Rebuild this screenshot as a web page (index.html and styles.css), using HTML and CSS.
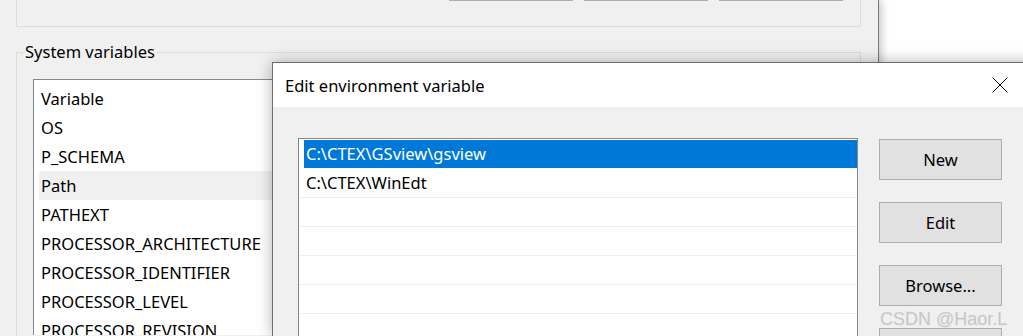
FILE: index.html
```html
<!DOCTYPE html>
<html lang="en">
  <head>
    <meta charset="UTF-8" />
    <meta name="viewport" content="width=device-width, initial-scale=1.0" />
    <title>Environment Variables</title>
    <link rel="stylesheet" href="styles.css">
  </head>
  <body>
    <div class="ventana">
      <div class="grupo-arriba">
        <div class="botones-arriba">
          <button class="btn"></button>
          <button class="btn"></button>
          <button class="btn"></button>
        </div>
      </div>
      <div class="grupo-sistema">
        <span class="leyenda">System variables</span>
        <div class="lista-sistema">
          <div class="fila">Variable</div>
          <div class="fila">OS</div>
          <div class="fila">P_SCHEMA</div>
          <div class="fila marcada">Path</div>
          <div class="fila">PATHEXT</div>
          <div class="fila">PROCESSOR_ARCHITECTURE</div>
          <div class="fila">PROCESSOR_IDENTIFIER</div>
          <div class="fila">PROCESSOR_LEVEL</div>
          <div class="fila">PROCESSOR_REVISION</div>
        </div>
      </div>
    </div>

    <div class="dialogo">
      <div class="titulo">
        <span>Edit environment variable</span>
        <span class="cerrar">
          <svg width="16" height="16" viewBox="0 0 16 16">
            <path d="M0.5 0.5 L15.5 15.5 M15.5 0.5 L0.5 15.5" stroke="#000" stroke-width="1" fill="none" />
          </svg>
        </span>
      </div>
      <div class="cuerpo">
        <div class="lista-rutas">
          <div class="ruta elegida">C:\CTEX\GSview\gsview</div>
          <div class="ruta">C:\CTEX\WinEdt</div>
          <div class="ruta"></div>
          <div class="ruta"></div>
          <div class="ruta"></div>
          <div class="ruta"></div>
        </div>
        <div class="acciones">
          <button class="btn grande">New</button>
          <button class="btn grande">Edit</button>
          <button class="btn grande">Browse...</button>
          <button class="btn grande corto"></button>
        </div>
      </div>
    </div>

    <div class="marca">CSDN @Haor.L</div>
  </body>
</html>
```

FILE: styles.css
```css
body{
    margin: 0;
    width: 1023px;
    height: 336px;
    overflow: hidden;
    position: relative;
    background: #fff;
    font-family: "Segoe UI", "Noto Sans", sans-serif;
    font-size: 16.5px;
    color: #000;
}
.ventana{
    box-sizing: border-box;
    width: 879px;
    height: 336px;
    background: #f0f0f0;
    border-right: 1px solid #7a7a7a;
    box-shadow: 2px 0 8px rgba(0, 0, 0, 0.25);
    overflow: hidden;
}
.btn{
    box-sizing: border-box;
    background: #e1e1e1;
    border: 1px solid #adadad;
    font: inherit;
    color: #000;
    padding: 0;
}
.grupo-arriba{
    box-sizing: border-box;
    display: flex;
    margin-left: 16px;
    width: 845px;
    height: 27px;
    border: 1px solid #dcdcdc;
    border-top: none;
}
.botones-arriba{
    display: flex;
    align-self: flex-start;
    gap: 11px;
    padding-left: 432px;
    margin-top: -40px;
}
.botones-arriba .btn{
    width: 124px;
    height: 41px;
}
.grupo-sistema{
    box-sizing: border-box;
    margin: 25px 0 0 16px;
    width: 845px;
    height: 284px;
    border: 1px solid #dcdcdc;
    border-bottom: none;
    padding-left: 16px;
}
.leyenda{
    display: block;
    width: fit-content;
    margin: -11px 0 0 -9px;
    padding: 0 1px;
    line-height: 20px;
    background: #f0f0f0;
}
.lista-sistema{
    box-sizing: border-box;
    width: 300px;
    height: 256px;
    overflow: hidden;
    margin-top: 17px;
    background: #fff;
    border: 1px solid #828790;
    border-bottom: none;
    padding: 4px 0 0 5px;
}
.fila{
    height: 29px;
    line-height: 29px;
    padding-left: 2px;
    white-space: nowrap;
}
.marcada{
    background: #f0f0f0;
}
.dialogo{
    position: absolute;
    left: 272px;
    top: 62px;
    width: 800px;
    height: 273px;
    overflow: hidden;
    border: 1px solid #6e6e6e;
    border-bottom: none;
    background: #f0f0f0;
    box-shadow: 0 0 14px rgba(0, 0, 0, 0.3);
}
.titulo{
    display: flex;
    align-items: center;
    height: 44px;
    padding-left: 12px;
    background: #fff;
}
.cerrar{
    display: flex;
    justify-content: center;
    align-items: center;
    width: 46px;
    height: 44px;
    margin-left: auto;
    margin-right: 50px;
}
.cuerpo{
    display: flex;
    gap: 21px;
    padding: 31px 0 0 25px;
}
.lista-rutas{
    box-sizing: border-box;
    width: 560px;
    height: 198px;
    overflow: hidden;
    background: #fff;
    border: 1px solid #828790;
    border-bottom: none;
    padding-top: 1px;
}
.ruta{
    height: 28px;
    line-height: 28px;
    padding-left: 7px;
    border-bottom: 1px solid #f0f0f0;
    white-space: nowrap;
}
.elegida{
    background: #0078d7;
    color: #fff;
    box-shadow: inset 5px 0 #fff;
    border-bottom-color: #fff;
}
.acciones{
    display: flex;
    flex-direction: column;
    gap: 22px;
    margin-top: 1px;
}
.grande{
    width: 123px;
    height: 41px;
}
.corto{
    height: 9px;
    border-bottom: none;
}
.marca{
    position: absolute;
    left: 880px;
    top: 309px;
    font-family: "Liberation Sans", Arial, sans-serif;
    font-size: 18px;
    color: #c4c4c4;
    -webkit-text-stroke: 0.3px #d8d8d8;
}
```
